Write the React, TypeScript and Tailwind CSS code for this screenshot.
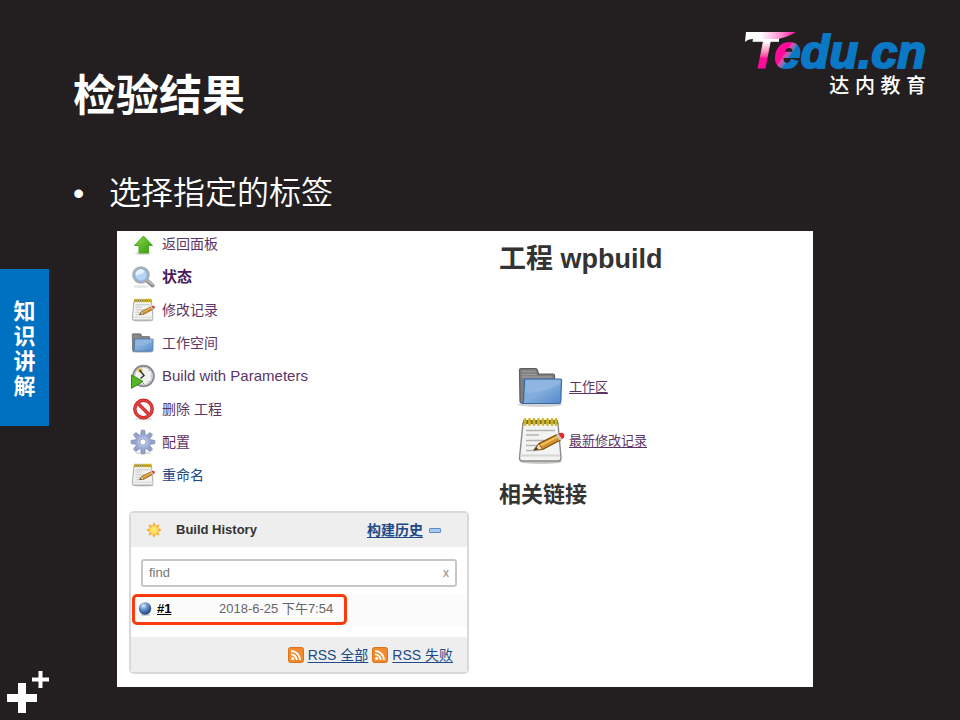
import type { ReactNode } from "react";

const sans = "font-['Liberation_Sans','Noto_Sans_CJK_SC',sans-serif]";

function UpIcon() {
  return (
    <svg width="24" height="24" viewBox="0 0 24 24" aria-hidden="true">
      <defs>
        <linearGradient id="up" x1="0" y1="0" x2="1" y2="1">
          <stop offset="0" stopColor="#8fd84a" />
          <stop offset="1" stopColor="#2f9a0c" />
        </linearGradient>
      </defs>
      <ellipse cx="12" cy="21.500" rx="8" ry="1.600" fill="#ddd" />
      <path d="M12.500 4L21.500 13.500H17.500V21H8V13.500H3.500Z" fill="url(#up)" stroke="#48a51f" strokeWidth="1" strokeLinejoin="round" />
    </svg>
  );
}

function SearchIcon() {
  return (
    <svg width="24" height="24" viewBox="0 0 24 24" aria-hidden="true">
      <ellipse cx="10" cy="21.500" rx="8" ry="1.600" fill="#e8e8e8" />
      <path d="M16 15.500L21.500 20.500" stroke="#8c8c8c" strokeWidth="4" strokeLinecap="round" />
      <path d="M16 15L21.500 19.500" stroke="#c9c9c9" strokeWidth="1.500" strokeLinecap="round" />
      <circle cx="10" cy="10" r="7.800" fill="#b5d2f3" stroke="#adadad" strokeWidth="2" />
      <circle cx="10" cy="10" r="6.300" fill="none" stroke="#7ba7db" strokeWidth="1" />
      <path d="M5 11A5 5 0 0 1 13.500 6C13 9 8 9 5 11Z" fill="#e5f1fd" />
    </svg>
  );
}

function NotepadIcon({ size }: { size: number }) {
  return (
    <svg width={size} height={size} viewBox="0 0 48 48" aria-hidden="true">
      <ellipse cx="24" cy="44.500" rx="21" ry="2.500" fill="#c9c9c9" />
      <path d="M6 6H41L44 41Q44 44 41 44H5Q2.500 44 2.500 41Z" fill="#f3f3f1" stroke="#8a8a86" strokeWidth="1.400" />
      <path d="M3.500 38.500H43" stroke="#d6d6d3" strokeWidth="2" />
      <path d="M9 13.500H38M9 18H22M9 23.500H34M9 28.500H24M9 33.500H18" stroke="#b4b4b2" strokeWidth="1.400" />
      <path d="M6 5H41" stroke="#7d7122" strokeWidth="4" />
      <path d="M8 2.500V7.500M12.500 2.500V7.500M17 2.500V7.500M21.500 2.500V7.500M26 2.500V7.500M30.500 2.500V7.500M35 2.500V7.500M39 2.500V7.500" stroke="#d0b32c" strokeWidth="2.800" strokeLinecap="round" />
      <path d="M17 33L22 26.500L40 17.500L43.500 23L25.500 32.500Z" fill="#d3932c" stroke="#7a4c0c" strokeWidth="1.200" strokeLinejoin="round" />
      <path d="M22.500 29L41 19.500" stroke="#f3c566" strokeWidth="1.800" />
      <path d="M17 33L22 26.500L25.500 32.500Z" fill="#f1d9ab" stroke="#7a4c0c" strokeWidth="0.800" />
      <path d="M17 33L19.500 30L21 32.500Z" fill="#2b2b2b" />
      <path d="M39 18L41.500 16.700L45 22.200L42.500 23.500Z" fill="#c9c9c9" />
      <path d="M41.500 16.700Q44.500 14.500 47 17Q48.500 20.500 45 22.200Z" fill="#e3292b" />
    </svg>
  );
}

function FolderIcon({ size }: { size: number }) {
  const id = `folder-${size}`;
  return (
    <svg width={size} height={size} viewBox="0 0 48 48" aria-hidden="true">
      <defs>
        <linearGradient id={id} x1="0" y1="0" x2="1" y2="1">
          <stop offset="0" stopColor="#7fabdf" />
          <stop offset="0.500" stopColor="#82addc" />
          <stop offset="1" stopColor="#5289c9" />
        </linearGradient>
      </defs>
      <ellipse cx="23" cy="41.500" rx="22" ry="2.500" fill="#d3d3d3" />
      <path d="M2.500 7Q2.500 5.500 4 5.500H18.500Q20 5.500 20.500 7.500L21.500 11H36Q37.500 11 37.500 12.500V40H5Q3 40 3 38Z" fill="#7d7d7d" stroke="#5c5c5c" strokeWidth="1.200" />
      <path d="M4.500 8.500H18.500M4.500 11.500H19.500M4.500 14H35.500" stroke="#999" strokeWidth="1.300" />
      <path d="M7.500 17Q7.700 16 8.700 16H43.500Q44.700 16 44.500 17.500L43.800 38.500Q43.700 40.500 42 40.500H5Q6.300 40 6.500 38Z" fill={`url(#${id})`} stroke="#3b69a7" strokeWidth="1.200" />
      <path d="M8.200 30Q25 30 43.500 21V17.200H8.900Z" fill="#9bbfe6" opacity="0.500" />
    </svg>
  );
}

function BuildIcon() {
  return (
    <svg width="26" height="26" viewBox="0 0 26 26" aria-hidden="true">
      <circle cx="13.500" cy="13" r="10.300" fill="#f2f3ea" stroke="#868b94" strokeWidth="2" />
      <circle cx="13.500" cy="13" r="8.700" fill="none" stroke="#c3c8cf" strokeWidth="1" />
      <path d="M20.500 13H21.500M13.500 20V21M18.500 8L19.300 7.200M18.500 18L19.300 18.800" stroke="#8b9097" strokeWidth="1" />
      <path d="M7.500 6L12 5.500L12.500 8.500L9 10Z" fill="#e9bd37" />
      <path d="M9.500 7L14 12.500L10.500 15.500" fill="none" stroke="#33363a" strokeWidth="1.500" />
      <path d="M1.500 12L13 18.500L1.500 25.300Z" fill="#55b82b" stroke="#318d11" strokeWidth="1" strokeLinejoin="round" />
    </svg>
  );
}

function DeleteIcon() {
  return (
    <svg width="24" height="24" viewBox="0 0 24 24" aria-hidden="true">
      <ellipse cx="12.500" cy="22" rx="9" ry="1.500" fill="#ddd" />
      <circle cx="12.500" cy="12" r="8.700" fill="#fff" stroke="#c51b1b" strokeWidth="3.400" />
      <path d="M6.500 6L18.500 18" stroke="#c51b1b" strokeWidth="3.400" />
      <circle cx="12.500" cy="12" r="8.700" fill="none" stroke="#e04040" strokeWidth="2" />
      <path d="M6.500 6L18.500 18" stroke="#e04040" strokeWidth="2" />
    </svg>
  );
}

const teeth = [0, 45, 90, 135, 180, 225, 270, 315];

function GearIcon() {
  return (
    <svg width="26" height="26" viewBox="0 0 26 26" aria-hidden="true">
      <ellipse cx="13" cy="24" rx="8" ry="1.300" fill="#ddd" />
      <g fill="#93a3cc" stroke="#7381a8" strokeWidth="0.700">
        {teeth.map((angle) => (
          <path key={angle} d="M10.500 7L11.400 1.200H14.600L15.500 7Z" transform={`rotate(${angle} 13 13)`} />
        ))}
      </g>
      <circle cx="13" cy="13" r="7.400" fill="#9dadd4" />
      <circle cx="13" cy="13" r="5" fill="#bac6e4" />
      <circle cx="13" cy="13" r="3.200" fill="#fff" stroke="#7a88b0" strokeWidth="0.800" />
    </svg>
  );
}

function SunIcon() {
  return (
    <svg width="16" height="16" viewBox="0 0 16 16" aria-hidden="true">
      <g fill="#f9a825">
        {teeth.map((angle) => (
          <path key={angle} d="M6.300 3.200L8 0.300L9.700 3.200Z" transform={`rotate(${angle} 8 8)`} />
        ))}
      </g>
      <circle cx="8" cy="8" r="4.300" fill="#ffe566" stroke="#f8b02c" strokeWidth="1" />
    </svg>
  );
}

function BallIcon() {
  return (
    <svg width="14" height="14" viewBox="0 0 14 14" aria-hidden="true">
      <defs>
        <radialGradient id="ball" cx="0.380" cy="0.280" r="0.700">
          <stop offset="0" stopColor="#dce9f8" />
          <stop offset="0.450" stopColor="#6a94cc" />
          <stop offset="1" stopColor="#1d447f" />
        </radialGradient>
      </defs>
      <ellipse cx="7.500" cy="12.700" rx="5" ry="1.200" fill="#ccc" />
      <circle cx="7" cy="6.500" r="6.200" fill="url(#ball)" />
    </svg>
  );
}

function RssIcon() {
  return (
    <svg width="16" height="16" viewBox="0 0 16 16" aria-hidden="true">
      <rect x="0.500" y="0.500" width="15" height="15" rx="2" fill="#f28a2e" stroke="#d9741c" />
      <circle cx="4.700" cy="11.500" r="1.600" fill="#fff" />
      <path d="M3 7.400A5.700 5.700 0 0 1 8.700 13M3 4A9 9 0 0 1 12 13" fill="none" stroke="#fff" strokeWidth="1.900" />
    </svg>
  );
}

interface Task {
  label: string;
  icon: ReactNode;
  tone: string;
}

const tasks: Task[] = [
  { label: "返回面板", icon: <UpIcon />, tone: "text-sm text-[#5c3566]" },
  { label: "状态", icon: <SearchIcon />, tone: "text-[15px] font-bold text-[#4a1a5a]" },
  { label: "修改记录", icon: <NotepadIcon size={24} />, tone: "text-sm text-[#5c3566]" },
  { label: "工作空间", icon: <FolderIcon size={24} />, tone: "text-sm text-[#5c3566]" },
  { label: "Build with Parameters", icon: <BuildIcon />, tone: "text-[15px] text-[#5c3566]" },
  { label: "删除 工程", icon: <DeleteIcon />, tone: "text-sm text-[#5c3566]" },
  { label: "配置", icon: <GearIcon />, tone: "text-sm text-[#5c3566]" },
  { label: "重命名", icon: <NotepadIcon size={24} />, tone: "text-sm text-[#204a87]" },
];

function TaskList() {
  return (
    <nav className="flex flex-col gap-[9px]">
      {tasks.map((task) => (
        <a key={task.label} href="#" className={`flex h-6 items-center gap-1.5 ${task.tone}`}>
          <span className="flex w-[27px] shrink-0 justify-center">{task.icon}</span>
          {task.label}
        </a>
      ))}
    </nav>
  );
}

function BuildHistory() {
  return (
    <section className="mt-6 rounded-[5px] border-2 border-[#d9d9d9] bg-white">
      <header className="flex h-[34px] items-center bg-[#eeeeee] pr-[26px] pl-[15px]">
        <SunIcon />
        <h2 className="ml-3.5 flex-1 text-[13px] font-bold text-[#333]">Build History</h2>
        <a href="#" className="text-sm font-bold text-[#204a87] underline underline-offset-2">构建历史</a>
        <button type="button" aria-label="−" className="ml-1.5 h-[5px] w-3 rounded-[1px] border border-[#5b8bc8] bg-[#a9c8ec]" />
      </header>
      <div className="mx-2.5 mt-3 flex h-7 items-center rounded-[3px] border-2 border-[#c6c6c6] px-1.5 text-[13px]">
        <input type="text" placeholder="find" aria-label="find" className="min-w-0 flex-1 outline-none placeholder:text-[#777]" />
        <button type="button" className="text-xs text-[#888]">x</button>
      </div>
      <div className="mt-[7px] mb-2.5 flex h-[33px] items-start bg-[#fbfbfb] pl-px">
        <div className="flex h-[31px] w-[215px] items-center rounded-[5px] border-[3px] border-[#fb3b0d] pb-0.5 pl-[3px] text-[13px]">
          <BallIcon />
          <a href="#" className="ml-[5px] w-[62px] font-bold text-black underline">#1</a>
          <time className="text-[#666]">2018-6-25 下午7:54</time>
        </div>
      </div>
      <footer className="flex h-[35px] items-center justify-end gap-1 bg-[#eeeeee] pr-3.5 text-sm text-[#204a87]">
        <RssIcon />
        <a href="#" className="underline underline-offset-2">RSS 全部</a>
        <RssIcon />
        <a href="#" className="underline underline-offset-2">RSS 失败</a>
      </footer>
    </section>
  );
}

function Logo() {
  return (
    <div className="flex flex-col items-end">
      <div className="relative flex h-10 items-center text-[47px] leading-10 font-bold italic">
        <svg width="54" height="10" viewBox="0 0 54 10" className="absolute top-0 left-0" aria-hidden="true">
          <defs>
            <linearGradient id="blade">
              <stop offset="0.300" stopColor="#fff" />
              <stop offset="0.700" stopColor="#ff8fd0" />
              <stop offset="1" stopColor="#ff0a9b" />
            </linearGradient>
          </defs>
          <path d="M2 0H52Q44 5 34 7H9Q4 7 1 10Z" fill="url(#blade)" />
        </svg>
        <span className="-mr-1 bg-linear-to-b from-white from-25% to-[#ff0a9b] to-65% bg-clip-text pl-1.5 text-transparent [-webkit-text-stroke:1px_transparent]">T</span>
        <span className="bg-linear-to-br from-[#ff0a9b] from-45% to-[#0a78c4] to-60% bg-clip-text text-transparent [-webkit-text-stroke:2px_transparent]">e</span>
        <span className="text-[#0a78c4] [-webkit-text-stroke:2px_#0a78c4]">du.cn</span>
      </div>
      <div className="mt-0.5 text-xl leading-6 font-medium text-white">达 内 教 育</div>
    </div>
  );
}

function Pluses() {
  return (
    <svg width="42" height="42" viewBox="0 0 42 42" className="ml-[7px]" aria-hidden="true">
      <path d="M11 12H19V23H30V31H19V42H11V31H0V23H11Z" fill="#fff" />
      <path d="M31.500 0H35.500V6.500H42V10.500H35.500V17H31.500V10.500H25V6.500H31.500Z" fill="#fff" />
    </svg>
  );
}

export default function App() {
  return (
    <div className={`flex min-h-screen bg-[#231f20] ${sans}`}>
      <aside className="flex w-[49px] shrink-0 flex-col justify-between pt-[269px] pb-[7px]">
        <div className="flex h-[157px] flex-col items-center justify-center bg-[#0070c0] pt-0.5 text-[22px] leading-[25px] font-bold text-white">
          <span>知</span>
          <span>识</span>
          <span>讲</span>
          <span>解</span>
        </div>
        <Pluses />
      </aside>
      <main className="min-w-0 flex-1 pb-[33px]">
        <header className="flex items-start justify-between pt-8 pr-[34px] pl-6">
          <h1 className="mt-10 text-[43px] leading-[48px] font-bold text-white">检验结果</h1>
          <Logo />
        </header>
        <ul className="mt-[53px] pl-6 text-[32px] leading-10 font-[350] text-white">
          <li className="flex items-center">
            <span className="w-9">•</span>
            选择指定的标签
          </li>
        </ul>
        <article className="mt-[18px] mr-[147px] ml-[68px] flex gap-[30px] bg-white pt-px pb-[13px] pl-3">
          <div className="w-[340px] shrink-0">
            <TaskList />
            <BuildHistory />
          </div>
          <div className="min-w-0 flex-1 text-[#333]">
            <h2 className="mt-[11px] text-[27px] leading-8 font-bold">工程 wpbuild</h2>
            <div className="mt-[88px] ml-[18px] flex flex-col gap-1.5 text-[13px] text-[#5c3566]">
              <a href="#" className="flex h-12 items-center gap-1 underline underline-offset-2">
                <FolderIcon size={48} />
                工作区
              </a>
              <a href="#" className="flex h-12 items-center gap-1 underline underline-offset-2">
                <NotepadIcon size={48} />
                最新修改记录
              </a>
            </div>
            <h3 className="mt-4 text-[22px] leading-7 font-bold">相关链接</h3>
          </div>
        </article>
      </main>
    </div>
  );
}
